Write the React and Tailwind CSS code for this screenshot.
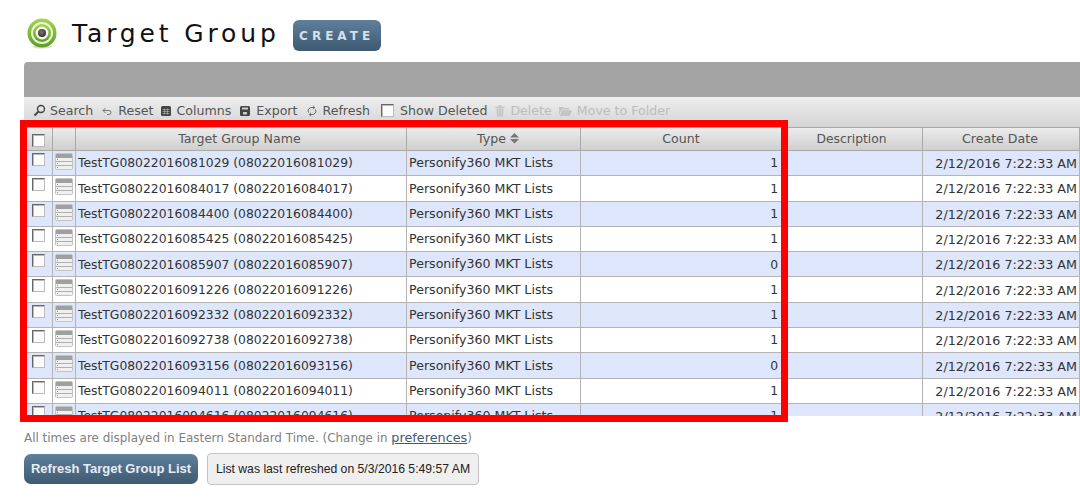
const rows = [
  ["08022016081029", 1],
  ["08022016084017", 1],
  ["08022016084400", 1],
  ["08022016085425", 1],
  ["08022016085907", 0],
  ["08022016091226", 1],
  ["08022016092332", 1],
  ["08022016092738", 1],
  ["08022016093156", 0],
  ["08022016094011", 1],
  ["08022016094616", 1],
];

const columns = "grid grid-cols-[29px_23px_331px_174px_203px_139px_157px]";
const headerCell = "flex items-center justify-center border-r border-[#a9a9a9] text-[#555]";
const bodyCell = "flex items-center border-r border-[#b4b4b4] px-[2px] pt-[1px] text-[#333] whitespace-nowrap";

function TargetLogo() {
  return (
    <svg width="32" height="32" viewBox="0 0 32 32" className="shrink-0">
      <defs>
        <linearGradient id="ring" x1="0" y1="0" x2="0" y2="1">
          <stop offset="0" stopColor="#a5d64c" />
          <stop offset="1" stopColor="#5d9e22" />
        </linearGradient>
        <radialGradient id="dot" cx="0.45" cy="0.4" r="0.6">
          <stop offset="0" stopColor="#777" />
          <stop offset="1" stopColor="#333" />
        </radialGradient>
      </defs>
      <ellipse cx="16" cy="29.5" rx="10" ry="2" fill="#ddd" />
      <circle cx="16" cy="16" r="14.5" fill="url(#ring)" />
      <circle cx="16" cy="16" r="11" fill="#e9f3da" />
      <circle cx="16" cy="16" r="9" fill="url(#ring)" />
      <circle cx="16" cy="16" r="6.4" fill="#f4f7ef" />
      <circle cx="16" cy="16" r="4" fill="url(#dot)" />
    </svg>
  );
}

function SearchIcon() {
  return (
    <svg width="13" height="13" viewBox="0 0 13 13" fill="none" stroke="#444" strokeWidth="1.4">
      <circle cx="8" cy="5" r="3.5" />
      <path d="M5.4 7.6 1.5 11.5" strokeWidth="2" />
    </svg>
  );
}

function ResetIcon() {
  return (
    <svg width="10" height="10" viewBox="0 0 10 10" fill="none" stroke="#777" strokeWidth="1">
      <path d="M3.5 2 1 4.5 3.5 7" />
      <path d="M1 4.5h6a2 2 0 0 1 0 4H5" />
    </svg>
  );
}

function ColumnsIcon() {
  return (
    <svg width="10" height="10" viewBox="0 0 10 10">
      <rect width="10" height="10" rx="1.5" fill="#444" />
      <path d="M1.5 3.5h7M1.5 5.5h7M1.5 7.5h7M3.5 2.5v6M6.5 2.5v6" stroke="#bbb" strokeWidth="0.6" />
    </svg>
  );
}

function ExportIcon() {
  return (
    <svg width="10" height="10" viewBox="0 0 10 10">
      <rect width="10" height="10" rx="1.5" fill="#444" />
      <rect x="2" y="1.5" width="6" height="2" fill="#ccc" />
      <rect x="3" y="6" width="4" height="2.5" fill="#ccc" />
    </svg>
  );
}

function RefreshIcon() {
  return (
    <svg width="10" height="12" viewBox="0 0 10 12" fill="none" stroke="#666" strokeWidth="1">
      <path d="M1.5 7.5A3.5 3.5 0 0 1 5 2.5h2" />
      <path d="M8.5 4.5A3.5 3.5 0 0 1 5 9.5H3" />
      <path d="M6 .8 7.8 2.5 6 4.2M4 7.8 2.2 9.5 4 11.2" />
    </svg>
  );
}

function TrashIcon() {
  return (
    <svg width="10" height="12" viewBox="0 0 10 12" fill="#c4c4c4">
      <rect x="0.5" y="1.5" width="9" height="1.4" />
      <rect x="3.5" y="0.3" width="3" height="1.4" />
      <path d="M1.5 3.5h7l-.5 8H2zM3.4 4.5v6h.7v-6zm2.5 0v6h.7v-6z" fillRule="evenodd" />
    </svg>
  );
}

function FolderIcon() {
  return (
    <svg width="13" height="10" viewBox="0 0 13 10" fill="#c4c4c4">
      <path d="M0 1h4l1 1h5v1.5H2.5L0 9z" />
      <path d="M3 4.3h10L10.6 10H.6z" />
    </svg>
  );
}

function RowIcon() {
  return (
    <svg width="18" height="17" viewBox="0 0 18 17">
      <rect x="0.5" y="0.5" width="17" height="16" rx="1" fill="#f0f0f0" stroke="#c2c2c2" />
      <rect x="1" y="1" width="16" height="4" fill="#a0a0a0" />
      <path d="M1 8.5h16M1 12.5h16" stroke="#b0b0b0" />
      <path d="M2 6.5h1M2 10.5h1M2 14.5h1" stroke="#999" />
    </svg>
  );
}

function Checkbox({ className = "" }) {
  return (
    <span className={`block h-[13px] w-[13px] border border-[#666] border-r-[#bbb] border-b-[#bbb] bg-[#fbfbfb] shadow-[inset_1px_1px_0_#bbb] ${className}`} />
  );
}

function ToolItem({ icon, label, gap, disabled }) {
  return (
    <span className={`flex items-center ${gap} ${disabled ? "text-[#bdbdbd]" : "text-[#555]"}`}>
      {icon}
      {label}
    </span>
  );
}

export default function App() {
  return (
    <div className="relative h-[498px] w-[1080px] overflow-hidden bg-white font-['DejaVu_Sans',Verdana,sans-serif]">
      <div className="flex h-[62px] items-start pl-[26px] pt-[17px]">
        <TargetLogo />
        <h1 className="ml-[14px] mt-[1px] text-[25px] leading-[32px] tracking-[3.85px] text-[#111]">Target Group</h1>
        <button className="ml-[13px] mt-[3px] h-[31px] w-[88px] rounded-[6px] bg-gradient-to-b from-[#5f7f9b] to-[#3f5a72] text-[12px] font-bold tracking-[4px] text-[#d5dfe8]">
          CREATE
        </button>
      </div>

      <div className="ml-[24px] w-[1056px]">
        <div className="h-[35px] rounded-tl-[4px] bg-[#a4a4a4]" />
        <div className="flex h-[30px] items-start bg-gradient-to-b from-[#eeeeee] to-[#d4d4d4] pl-[9px] pt-[6px] text-[12.6px] leading-[15px]">
          <ToolItem icon={<SearchIcon />} label="Search" gap="gap-[4px]" />
          <span className="ml-[9px]"><ToolItem icon={<ResetIcon />} label="Reset" gap="gap-[6px]" /></span>
          <span className="ml-[8px]"><ToolItem icon={<ColumnsIcon />} label="Columns" gap="gap-[5px]" /></span>
          <span className="ml-[9px]"><ToolItem icon={<ExportIcon />} label="Export" gap="gap-[6px]" /></span>
          <span className="ml-[9px]"><ToolItem icon={<RefreshIcon />} label="Refresh" gap="gap-[6px]" /></span>
          <span className="ml-[11px]"><ToolItem icon={<Checkbox />} label="Show Deleted" gap="gap-[6px]" /></span>
          <span className="ml-[8px]"><ToolItem icon={<TrashIcon />} label="Delete" gap="gap-[5px]" disabled /></span>
          <span className="ml-[7px]"><ToolItem icon={<FolderIcon />} label="Move to Folder" gap="gap-[5px]" disabled /></span>
        </div>

        <div className="h-[289px] overflow-hidden">
          <div className={`${columns} h-[24px] border-y border-[#a9a9a9] bg-gradient-to-b from-[#ececec] to-[#cfcfcf] text-[12.6px]`}>
            <div className={headerCell}><Checkbox className="mt-[2px]" /></div>
            <div className={headerCell} />
            <div className={`${headerCell} pr-[3px]`}>Target Group Name</div>
            <div className={`${headerCell} pl-[9px]`}>
              Type
              <svg width="9" height="11" viewBox="0 0 9 11" fill="#777" className="ml-[4px] mb-[2px]">
                <path d="M4.5 0 9 4.5H0zM0 6h9L4.5 10.5z" />
              </svg>
            </div>
            <div className={`${headerCell} pr-[2px]`}>Count</div>
            <div className={`${headerCell} pr-[3px] text-[12.3px]`}>Description</div>
            <div className={`${headerCell} pr-[2px]`}>Create Date</div>
          </div>
          {rows.map(([id, count], i) => (
            <div
              key={id}
              className={`${columns} h-[25.3px] border-b border-[#b4b4b4] ${i % 2 === 0 ? "bg-[#dde6fb]" : "bg-white"}`}
            >
              <div className="flex items-start justify-center border-r border-[#b4b4b4] pt-[2px]"><Checkbox /></div>
              <div className="flex items-start justify-center border-r border-[#b4b4b4] pt-[2px]"><RowIcon /></div>
              <div className={`${bodyCell} text-[12.35px]`}>{`TestTG${id} (${id})`}</div>
              <div className={`${bodyCell} text-[12.6px]`}>Personify360 MKT Lists</div>
              <div className={`${bodyCell} justify-end pr-[5px] text-[12.35px]`}>{count}</div>
              <div className={bodyCell} />
              <div className={`${bodyCell} justify-end text-[12.7px]`}>2/12/2016 7:22:33 AM</div>
            </div>
          ))}
        </div>

        <p className="mt-[14px] text-[11.95px] leading-[16px] text-[#808080]">
          All times are displayed in Eastern Standard Time. (Change in{" "}
          <a className="text-[12.8px] text-[#3f5a72] underline">preferences</a>)
        </p>

        <div className="mt-[7px] flex items-center font-['Liberation_Sans',Arial,sans-serif]">
          <button className="h-[30px] w-[174px] rounded-[7px] bg-gradient-to-b from-[#5f7f9b] to-[#3f5a72] text-[13px] font-bold text-[#e6edf3]">
            Refresh Target Group List
          </button>
          <div className="ml-[9px] flex h-[32px] w-[272px] items-center justify-center rounded-[4px] border border-[#c4c4c4] bg-[#efefef] text-[12.2px] text-[#222]">
            List was last refreshed on 5/3/2016 5:49:57 AM
          </div>
        </div>
      </div>

      {/* annotation box drawn over the screenshot */}
      <div className="absolute left-[20px] top-[120px] h-[302px] w-[768px] border-[7px] border-[#ff0000]" />
    </div>
  );
}
